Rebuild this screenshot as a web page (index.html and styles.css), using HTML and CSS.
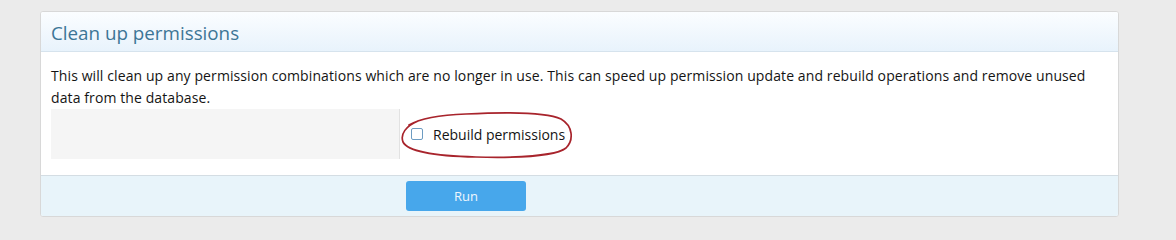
FILE: index.html
```html
<!DOCTYPE html>
<html lang="en">
<head>
<meta charset="utf-8">
<title>Clean up permissions</title>
<link rel="stylesheet" href="styles.css">
</head>
<body>
<div class="page">
  <form class="block">
    <h2 class="block-header">Clean up permissions</h2>
    <div class="block-body">
      <p class="explain">This will clean up any permission combinations which are no longer in use. This can speed up permission update and rebuild operations and remove unused data from the database.</p>
      <div class="form-row">
        <div class="form-label"></div>
        <div class="form-input">
          <label class="check">
            <span class="box"></span>
            <span class="check-label">Rebuild permissions</span>
          </label>
          <svg class="circle" viewBox="0 0 184 50" width="184" height="50" aria-hidden="true">
            <path d="M22 11 C10 16 4 24 7 32 C12 42 40 46 80 47 C120 48 160 46 170 38 C178 30 177 16 165 9 C150 2 110 2 70 4 C45 5 25 8 13 15" fill="none" stroke="#a8242c" stroke-width="1.7" stroke-linecap="round" stroke-linejoin="round"/>
          </svg>
        </div>
      </div>
    </div>
    <div class="block-footer">
      <button type="button" class="button">Run</button>
    </div>
  </form>
</div>
</body>
</html>
```
FILE: styles.css
```css
html, body {
  margin: 0;
  padding: 0;
  background: #ebebeb;
  height: 234px;
  overflow: hidden;
}
body {
  font-family: "Open Sans", "Noto Sans", sans-serif;
  color: #141414;
}
.page {
  padding: 11px 57px 0 40px;
}
.block {
  display: block;
  margin: 0;
  background: #fff;
  border: 1px solid #d8d8d8;
  border-radius: 3px;
  overflow: hidden;
}
.block-header {
  margin: 0;
  height: 40px;
  box-sizing: border-box;
  padding: 9px 10px 0;
  font-weight: normal;
  font-size: 18.8px;
  line-height: 24px;
  color: #3c7596;
  background: linear-gradient(to bottom, #fbfdff 0%, #e8f3fc 100%);
  border-bottom: 1px solid #d6e3ed;
}
.block-body {
  padding: 13px 10px 16px;
}
.explain {
  margin: 0;
  font-size: 14px;
  letter-spacing: 0.1px;
  line-height: 22px;
}
.form-row {
  display: flex;
  height: 50px;
}
.form-label {
  width: 348px;
  background: #f5f5f5;
  border-right: 1px solid #e2e2e2;
}
.form-input {
  position: relative;
  display: flex;
  align-items: center;
  padding-left: 11px;
}
.check {
  display: flex;
  align-items: center;
  gap: 10px;
  font-size: 14px;
}
.box {
  width: 10px;
  height: 10px;
  border: 1px solid #6d9cc2;
  border-radius: 2px;
  background: #fff;
}
.circle {
  position: absolute;
  left: -4px;
  top: 1px;
}
.block-footer {
  height: 41px;
  box-sizing: border-box;
  border-top: 1px solid #d4dde3;
  background: #e8f4fa;
  padding: 5px 0 0 365px;
}
.button {
  width: 120px;
  height: 30px;
  border: 0;
  border-radius: 3px;
  background: #47a7eb;
  color: #eef6fd;
  font-family: inherit;
  font-size: 13px;
  padding: 0;
}
```
